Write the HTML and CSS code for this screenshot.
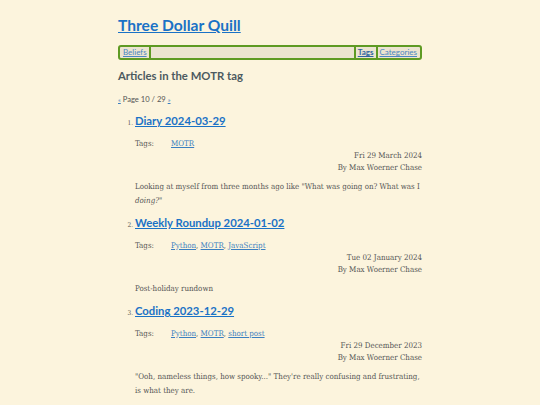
FILE: index.html
```html
<!DOCTYPE html>
<html>
<head>
<meta charset="utf-8">
<link rel="stylesheet" href="styles.css">
</head>
<body>
<div class="page">
  <header class="site-header">
    <h1 class="site-title"><a href="#">Three Dollar Quill</a></h1>
    <nav class="nav">
      <a class="nav-item" href="#">Beliefs</a>
      <span class="nav-fill"></span>
      <a class="nav-item current" href="#">Tags</a>
      <a class="nav-item last" href="#">Categories</a>
    </nav>
  </header>
  <main>
    <h2 class="page-heading">Articles in the MOTR tag</h2>
    <p class="pager"><a href="#">«</a> Page 10 / 29 <a href="#">»</a></p>
    <ol class="articles">
      <li class="article">
        <h3 class="article-title"><a href="#">Diary 2024-03-29</a></h3>
        <div class="tags"><span class="tags-label">Tags:</span><span class="tags-list"><a href="#">MOTR</a></span></div>
        <div class="meta"><div>Fri 29 March 2024</div><div>By Max Woerner Chase</div></div>
        <p class="summary">Looking at myself from three months ago like "What was going on? What was I <em>doing?</em>"</p>
      </li>
      <li class="article">
        <h3 class="article-title"><a href="#">Weekly Roundup 2024-01-02</a></h3>
        <div class="tags"><span class="tags-label">Tags:</span><span class="tags-list"><a href="#">Python</a>, <a href="#">MOTR</a>, <a href="#">JavaScript</a></span></div>
        <div class="meta"><div>Tue 02 January 2024</div><div>By Max Woerner Chase</div></div>
        <p class="summary">Post-holiday rundown</p>
      </li>
      <li class="article">
        <h3 class="article-title"><a href="#">Coding 2023-12-29</a></h3>
        <div class="tags"><span class="tags-label">Tags:</span><span class="tags-list"><a href="#">Python</a>, <a href="#">MOTR</a>, <a href="#">short post</a></span></div>
        <div class="meta"><div>Fri 29 December 2023</div><div>By Max Woerner Chase</div></div>
        <p class="summary">"Ooh, nameless things, how spooky..." They're really confusing and frustrating, is&nbsp;what they are.</p>
      </li>
    </ol>
  </main>
</div>
</body>
</html>
```

FILE: styles.css
```css
html, body {
  margin: 0;
  padding: 0;
  background: #fcf4dd;
}
body {
  font-family: "DejaVu Serif Condensed", "DejaVu Serif", serif;
  font-stretch: condensed;
  color: #555555;
  font-size: 7.9px;
}
a { color: #3b7fc0; }
.page {
  width: 304px;
  margin: 0 auto;
  padding-top: 14px;
}
.site-title {
  margin: 0;
  font-family: Lato, sans-serif;
  font-size: 15.6px;
  font-weight: 700;
  line-height: 23px;
}
.site-title a { color: #1a72c6; }
.nav {
  margin-top: 8px;
  display: flex;
  align-items: center;
  height: 11px;
  border: 2px solid #5e9a23;
  border-radius: 3px;
  background: #ece4d0;
  font-family: Lato, sans-serif;
  font-size: 8px;
  padding: 0 1px;
}
.nav-item {
  padding: 0 2px;
  line-height: 11px;
  color: #4a86c2;
}
.nav-fill {
  flex: 1;
  align-self: stretch;
  border-left: 2px solid #5e9a23;
  border-right: 2px solid #5e9a23;
}
.nav-item.current {
  font-weight: 700;
  color: #2f66a0;
  border-right: 2px solid #5e9a23;
}
.page-heading {
  margin: 8px 0 0;
  font-family: Lato, sans-serif;
  font-size: 11.3px;
  font-weight: 700;
  color: #4c5a60;
  line-height: 16px;
}
.pager {
  margin: 10px 0 0;
  font-family: Lato, sans-serif;
  font-size: 7.6px;
  line-height: 10px;
  color: #555;
}
.pager a { font-size: 6.5px; }
.articles {
  margin: 7px 0 0;
  padding-left: 17px;
}
.article::marker {
  font-family: "DejaVu Serif Condensed", "DejaVu Serif", serif;
  font-size: 6.5px;
  color: #555;
}
.article-title {
  margin: 0;
  font-family: Lato, sans-serif;
  font-size: 11.3px;
  font-weight: 700;
  line-height: 18px;
}
.article-title a { color: #1a72c6; }
.tags {
  margin-top: 7.5px;
  display: flex;
  line-height: 11px;
}
.tags-label { width: 36px; flex: none; }
.meta {
  text-align: right;
  line-height: 12px;
  margin-top: 1.5px;
}
.summary {
  margin: 6px 0 6px;
  line-height: 14px;
}
```
